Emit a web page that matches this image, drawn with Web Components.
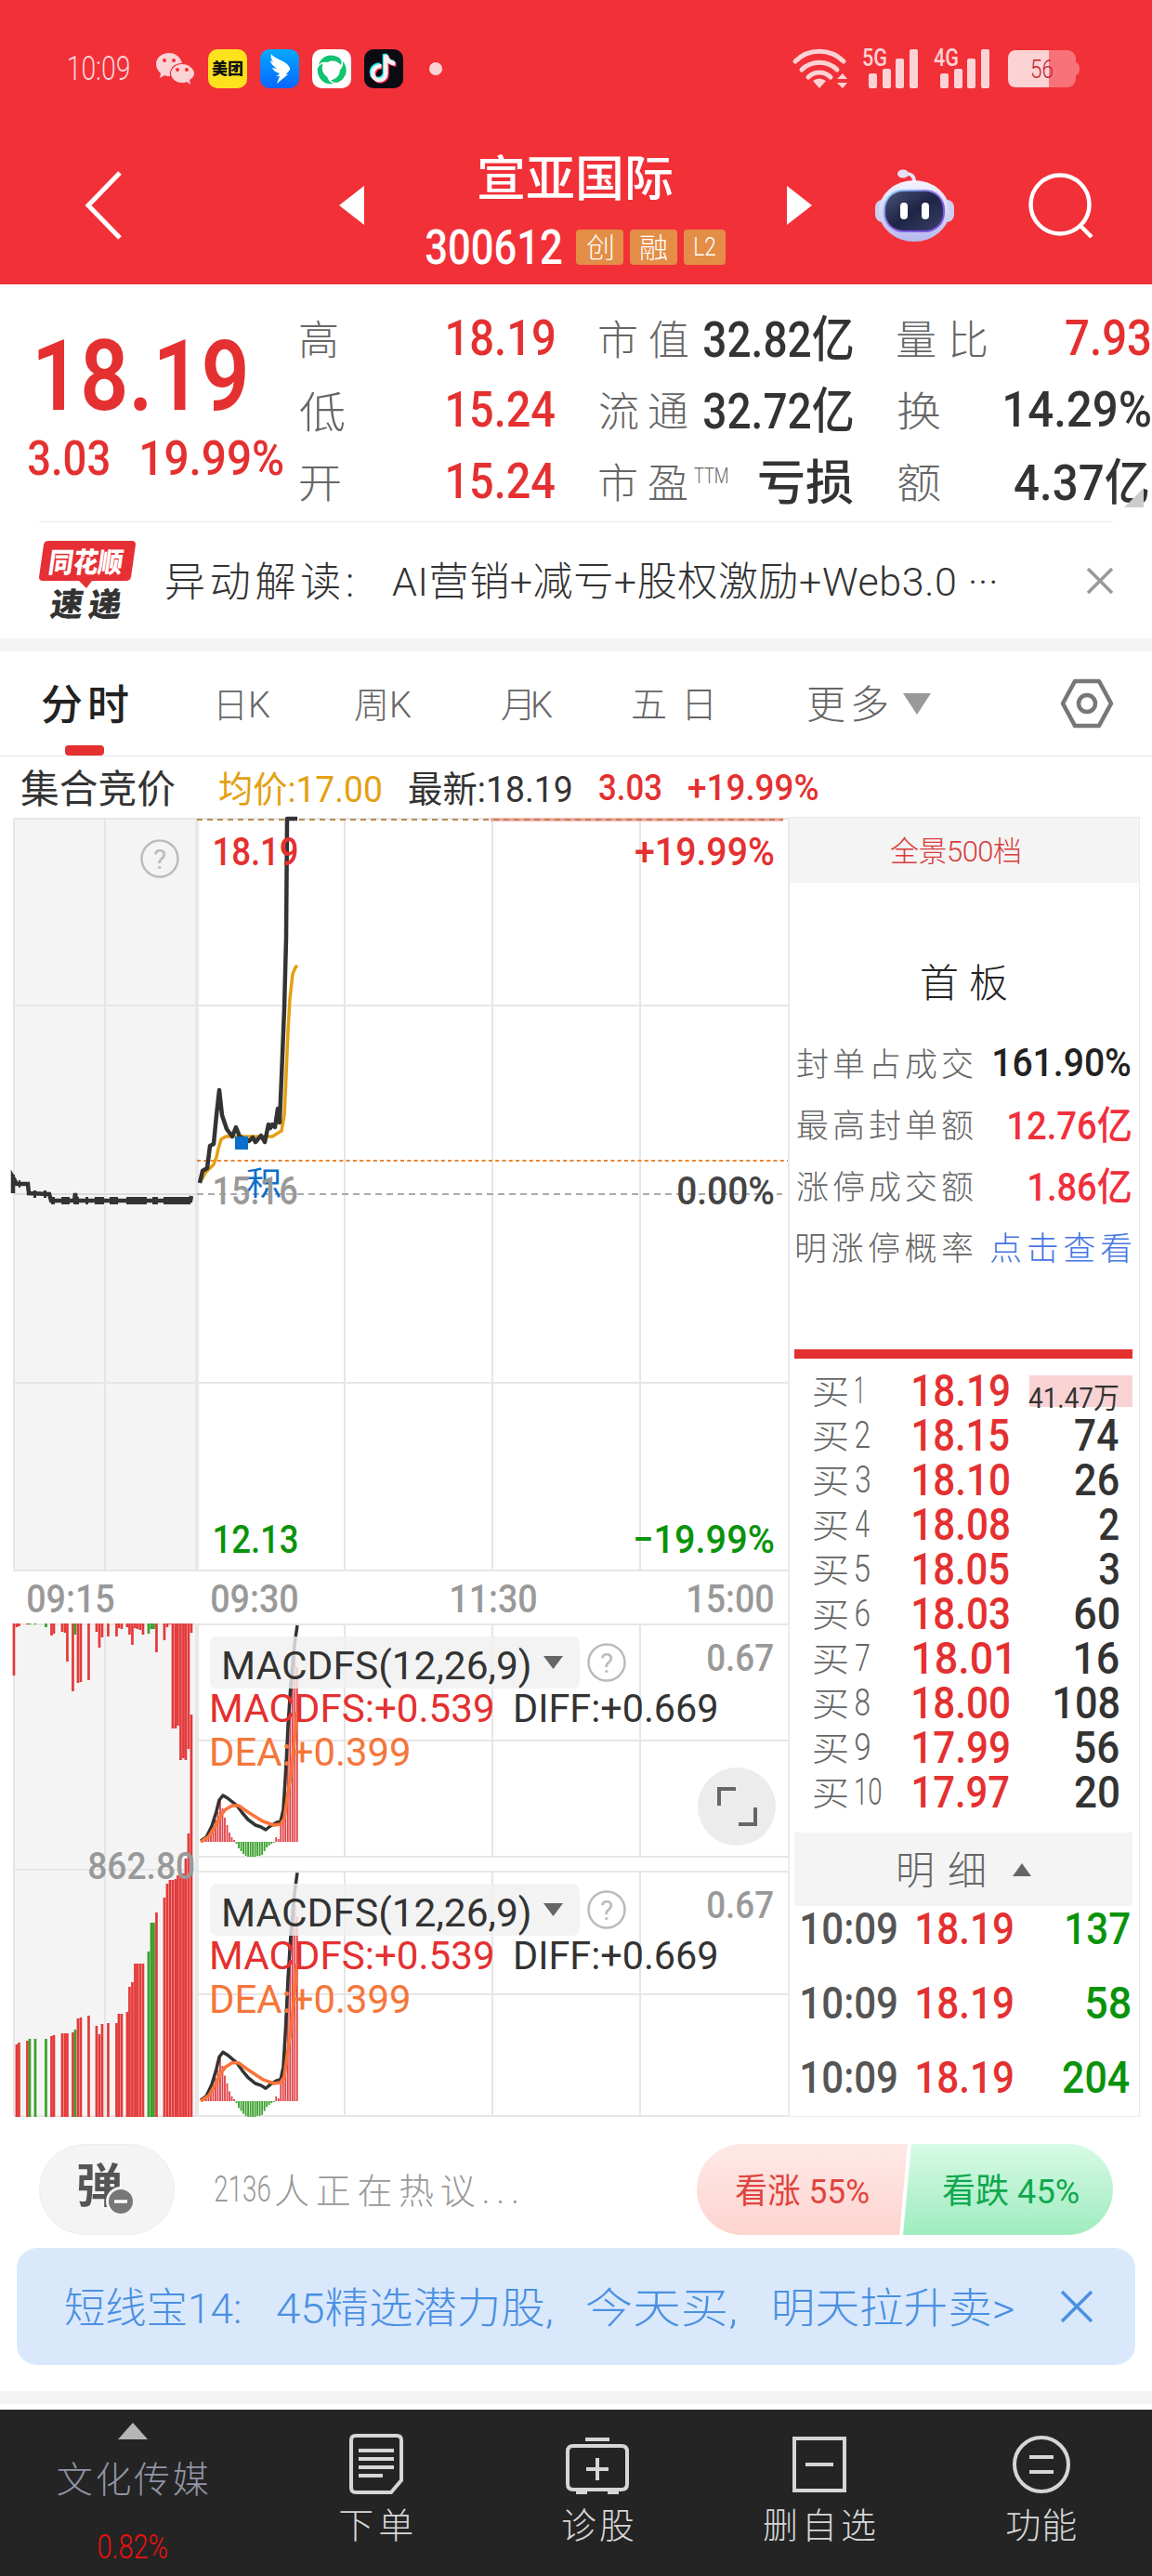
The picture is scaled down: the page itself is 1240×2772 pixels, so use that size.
<!DOCTYPE html>
<html lang="zh-CN">
<head>
<meta charset="utf-8">
<title>宣亚国际 300612</title>
<style>
  body {
    margin: 0;
    width: 1240px;
    height: 2772px;
    overflow: hidden;
    background: #fff;
    color: #333;
    font-family: Roboto, "Noto Sans CJK SC", sans-serif;
  }
</style>
</head>
<body>
<stock-page></stock-page>

<script>
const FONT = 'Roboto, "Noto Sans CJK SC", sans-serif';
const RED = '#e43030';
const pen = document.createElement('canvas').getContext('2d');

// Text whose ink fills exactly `w` pixels: scaled, or letter-spaced with `spread`.
class FitText extends HTMLElement {
  constructor() {
    super();
    this.attachShadow({mode: 'open'});
  }
  connectedCallback() {
    const text = this.getAttribute('text');
    const size = +this.getAttribute('size');
    const weight = this.getAttribute('weight') || 500;
    const w = +this.getAttribute('w');
    pen.font = `${weight} ${size}px ${FONT}`;
    const m = pen.measureText(text);
    const ink = m.actualBoundingBoxRight + m.actualBoundingBoxLeft;
    const spread = this.hasAttribute('spread') && text.length > 1;
    const k = spread ? 1 : w / ink;
    const ls = spread ? (w - ink) / (text.length - 1) : 0;
    // ideographs sit a little high on the Latin baseline
    const drop = /[\u4e00-\u9fff]/.test(text) ? size * .045 : 0;
    this.shadowRoot.innerHTML = `
      <style>
        :host {
          display: block;
          flex: none;
          width: ${w}px;
          height: ${size}px;
          color: ${this.getAttribute('color') || 'inherit'};
        }
        span {
          display: block;
          width: max-content;
          font: ${weight} ${size}px/${size}px ${FONT};
          letter-spacing: ${ls}px;
          white-space: pre;
          transform-origin: 0 0;
          transform: translate(${m.actualBoundingBoxLeft * k}px, ${drop}px) scaleX(${k});
        }
      </style>
      <span></span>
    `;
    this.shadowRoot.querySelector('span').textContent = text;
  }
}
customElements.define('fit-text', FitText);

const t = (text, w, size, color = '', weight = 500, extra = '') =>
  `<fit-text text="${text}" w="${w}" size="${size}" color="${color}" weight="${weight}" ${extra}></fit-text>`;
const thin = (text, w, size, color = '#666', extra = '') => t(text, w, size, color, 300, 'spread ' + extra);
const gap = w => `<span style="flex:none;width:${w}px"></span>`;

class BaseElement extends HTMLElement {
  constructor() {
    super();
    this.attachShadow({mode: 'open'});
  }
  connectedCallback() {
    this.shadowRoot.innerHTML = `<style>svg { display: block; flex: none; overflow: visible; } ${this.getStyles()}</style>${this.getTemplate()}`;
  }
}

class StatusBar extends BaseElement {
  getStyles() {
    return `
      :host { display: flex; align-items: center; height: 44px; padding: 52px 78px 0 74px; }
      .apps { display: flex; gap: 14px; margin-left: 15px; }
      .right { display: flex; align-items: center; margin-left: auto; }
    `;
  }
  getTemplate() {
    const bars = label => `
      <svg width="60" height="44" viewBox="0 0 60 44" fill="#fcd3d5">
        <text x="0" y="19" font-size="26" font-weight="500" font-family="Roboto" textLength="27" lengthAdjust="spacingAndGlyphs">${label}</text>
        <rect x="7" y="27" width="9" height="16" rx="2"/><rect x="22" y="22" width="9" height="21" rx="2"/>
        <rect x="36" y="11" width="9" height="32" rx="2"/><rect x="51" y="1" width="9" height="42" rx="2"/>
      </svg>`;
    return `
      ${t('10:09', 65, 36, '#fcd3d5', 300)}
      <svg style="margin-left:29px" width="41" height="34" viewBox="0 0 41 34">
        <path d="M14 0C6 0 0 5 0 12c0 4 2 7 5 10l-1 5 5-3c2 1 4 1 6 1C14 17 19 11 28 11 26 4 21 0 14 0Z" fill="#fcd3d5"/>
        <path d="M28 12c-7 0-12 5-12 10s5 10 12 10c2 0 3 0 5-1l4 3-1-5c3-2 5-4 5-7 0-5-6-10-13-10Z" fill="#fcd3d5"/>
        <g fill="#f23038"><circle cx="9" cy="8" r="2"/><circle cx="19" cy="8" r="2"/><circle cx="23" cy="18" r="2"/><circle cx="33" cy="18" r="2"/></g>
      </svg>
      <div class="apps">
        <svg width="42" height="42" viewBox="0 0 42 42"><rect width="42" height="42" rx="10" fill="#ffe21e"/>
          <text x="4" y="27" font-size="17" font-weight="900" fill="#111" font-family="Noto Sans CJK SC">美团</text></svg>
        <svg width="42" height="42" viewBox="0 0 42 42">
          <defs><linearGradient id="d" x2="0" y2="1"><stop stop-color="#06a9ff"/><stop offset="1" stop-color="#0966ff"/></linearGradient></defs>
          <rect width="42" height="42" rx="10" fill="url(#d)"/>
          <path d="M12 5c2 4 11 6 17 11q4 4 3 6l-4 5h2L18 37l3-8h-4q3-1 4-3c-4-1-7-3-8-6l5 1c-4-3-7-6-7-9l3 2c-2-3-3-6-2-9Z" fill="#fff"/></svg>
        <svg width="42" height="42" viewBox="0 0 42 42"><rect width="42" height="42" rx="10" fill="#fff"/>
          <g fill="#11c470"><path id="s" d="M7 17C9 8 19 3 29 9c3 3 3 6 2 8-3-4-9-6-14-3-5-1-8 0-10 3Z"/>
            <use href="#s" transform="rotate(120 21 22)"/><use href="#s" transform="rotate(240 21 22)"/></g></svg>
        <svg width="42" height="42" viewBox="0 0 42 42"><rect width="42" height="42" rx="10" fill="#0b0b14"/>
          <g fill="none" stroke-width="4.500"><path d="M18 18c-5-1-9 3-9 8a7 7 0 0 0 14 0V6c1 5 5 9 10 9" stroke="#25f4ee" transform="translate(-1 -1)"/>
          <path d="M18 18c-5-1-9 3-9 8a7 7 0 0 0 14 0V6c1 5 5 9 10 9" stroke="#fe2c55" transform="translate(1.500 1.500)"/>
          <path d="M18 18c-5-1-9 3-9 8a7 7 0 0 0 14 0V6c1 5 5 9 10 9" stroke="#f5f0f0" transform="translate(.3 .3)"/></g></svg>
      </div>
      <svg style="margin-left:28px" width="14" height="14"><circle cx="7" cy="7" r="7" fill="#fcd3d5"/></svg>
      <div class="right">
        <svg width="60" height="44" viewBox="0 0 60 44" fill="none" stroke="#fcd3d5" stroke-width="5" stroke-linecap="round">
          <path d="M3 14a37 37 0 0 1 52 0M10 23a27 27 0 0 1 38 0"/><path d="M17 31a17 17 0 0 1 24 0"/>
          <path d="M22 35q7-5 14 0l-7 8Z M54 27l5 6H48ZM54 43l5-6H48Z" fill="#fcd3d5" stroke="none"/></svg>
        ${gap(15)}${bars('5G')}
        ${gap(17)}${bars('4G')}
        <svg style="margin-left:20px" width="77" height="40" viewBox="0 0 77 40">
          <rect width="73" height="40" rx="9" fill="#f77279"/><path d="M73 13q4 1 4 7t-4 7Z" fill="#f77279"/>
          <path d="M9 0h35v40H9q-9 0-9-9V9q0-9 9-9Z" fill="#fcd3d5"/>
          <text x="24" y="30" font-size="28" font-family="Roboto" font-weight="300" fill="#c4242c" textLength="25" lengthAdjust="spacingAndGlyphs">56</text></svg>
      </div>
    `;
  }
}
customElements.define('status-bar', StatusBar);

class TitleBar extends BaseElement {
  getStyles() {
    return `
      :host { display: flex; align-items: center; height: 142px; padding: 54px 64px 0 92px; }
      .center { width: 455px; display: flex; flex-direction: column; align-items: center; gap: 28px; padding-top: 10px; }
      .code { display: flex; align-items: center; height: 40px; }
      .tag { display: flex; align-items: center; justify-content: center; width: 51px; height: 38px; margin-left: 7px; border-radius: 4px; background: #e48d46; }
    `;
  }
  getTemplate() {
    return `
      <svg width="39" height="74" viewBox="0 0 39 74"><path d="M37 2 3 37l34 35" fill="none" stroke="#fff" stroke-width="5"/></svg>
      <svg style="margin-left:234px" width="27" height="42"><path d="M27 0v42L0 21Z" fill="#fff"/></svg>
      <div class="center">
        ${t('宣亚国际', 208, 52, '#fff')}
        <div class="code">
          ${t('300612', 147, 51, '#fff')}
          <span class="tag" style="margin-left:15px">${t('创', 28, 30, '#fff', 300)}</span>
          <span class="tag">${t('融', 29, 30, '#fff', 300)}</span>
          <span class="tag" style="width:45px">${t('L2', 22, 27, '#fff', 300)}</span>
        </div>
      </div>
      <svg width="27" height="42"><path d="M0 0v42l27-21Z" fill="#fff"/></svg>
      <svg style="margin-left:68px" width="85" height="78" viewBox="0 0 85 78">
        <defs>
          <linearGradient id="h" x2="0" y2="1"><stop stop-color="#f5f4ff"/><stop offset="1" stop-color="#b8b9ee"/></linearGradient>
          <linearGradient id="f" x2="1" y2="1"><stop stop-color="#4a5378"/><stop offset=".5" stop-color="#1e2444"/><stop offset="1" stop-color="#3a4066"/></linearGradient>
          <linearGradient id="e" x2="1" y2="1"><stop stop-color="#7fe3f4"/><stop offset=".5" stop-color="#8d62ea"/><stop offset="1" stop-color="#6d53d8"/></linearGradient>
        </defs>
        <path d="M42 13Q42 4 31 5" fill="none" stroke="#e4e0f4" stroke-width="4"/><ellipse cx="30" cy="5" rx="6" ry="4.500" fill="#e4e0f4"/>
        <rect x="0" y="33" width="85" height="24" rx="8" fill="#cfceef"/>
        <ellipse cx="42" cy="45" rx="38" ry="33" fill="url(#h)"/>
        <rect x="9" y="22" width="66" height="46" rx="21" fill="url(#e)"/><rect x="11" y="24" width="62" height="42" rx="19" fill="url(#f)"/>
        <rect x="27" y="36" width="8" height="18" rx="4" fill="#fff"/><rect x="50" y="36" width="8" height="18" rx="4" fill="#fff"/>
      </svg>
      <svg style="margin-left:80px" width="69" height="70" viewBox="0 0 69 70" fill="none" stroke="#fff" stroke-width="4.500"><circle cx="34" cy="34" r="31.500"/><path d="m56 57 12 12"/></svg>
    `;
  }
}
customElements.define('title-bar', TitleBar);

class QuotePanel extends BaseElement {
  getStyles() {
    return `
      :host { display: flex; height: 255px; position: relative; }
      .price { width: 323px; padding-top: 46px; box-sizing: border-box; }
      .price > div { display: flex; gap: 36px; padding: 10px 0 0 30px; }
      .price > fit-text { margin-left: 41px; }
      .table { display: grid; grid-template-columns: 274px 273px 272px; grid-auto-rows: 77px; column-gap: 48px; padding-top: 20px; }
      .cell { display: flex; align-items: center; justify-content: space-between; }
      .pe { display: flex; align-items: center; gap: 7px; }
      .pe :last-child { margin-top: -12px; }
      .corner { position: absolute; right: 9px; top: 219px; }
    `;
  }
  getTemplate() {
    const cell = (label, value) => `<div class="cell">${label}${value}</div>`;
    return `
      <div class="price">
        ${t('18.19', 223, 106, RED, 600)}
        <div>${t('3.03', 87, 52, RED)}${t('19.99%', 151, 52, RED)}</div>
      </div>
      <div class="table">
        ${cell(thin('高', 40, 44), t('18.19', 115, 53, RED))}
        ${cell(thin('市值', 95, 44), t('32.82亿', 160, 53))}
        ${cell(thin('量比', 96, 44), t('7.93', 91, 53, RED))}
        ${cell(thin('低', 48, 46), t('15.24', 115, 53, RED))}
        ${cell(thin('流通', 95, 44), t('32.72亿', 160, 53))}
        ${cell(thin('换', 46, 44), t('14.29%', 156, 53))}
        ${cell(thin('开', 43, 44), t('15.24', 115, 53, RED))}
        ${cell(`<span class="pe">${thin('市盈', 95, 44)}${t('TTM', 36, 23, '#666', 300)}</span>`, t('亏损', 101, 52))}
        ${cell(thin('额', 46, 44), t('4.37亿', 144, 53, '', 500, 'style="margin-right:2px"'))}
      </div>
      <svg class="corner" width="21" height="21"><path d="M21 0v21H0Z" fill="#ccc"/></svg>
    `;
  }
}
customElements.define('quote-panel', QuotePanel);

class NewsRow extends BaseElement {
  getStyles() {
    return `
      :host { display: flex; align-items: center; height: 125px; margin: 0 42px; border-top: 1px solid #e8e8e8; }
    `;
  }
  getTemplate() {
    return `
      <svg width="104" height="86" viewBox="0 0 104 86" font-family="Noto Sans CJK SC" font-weight="900">
        <path d="M10 0h90q4 0 4 4l-5 35q-1 4-5 4H57l-6 8-8-8H4q-4 0-4-4L5 4q1-4 5-4Z" fill="#e63035"/>
        <text transform="translate(9 34) skewX(-8)" font-size="30" fill="#fff" textLength="80" lengthAdjust="spacingAndGlyphs">同花顺</text>
        <text transform="translate(11 81) skewX(-8)" font-size="35" fill="#333" textLength="76">速递</text>
      </svg>
      ${gap(33)}
      ${thin('异动解读:', 200, 44, '#333')}${gap(43)}
      ${thin('AI营销+减亏+股权激励+Web3.0 ···', 650, 43, '#333')}
      <svg style="margin-left:auto" width="28" height="28"><path d="m1 1 26 26M27 1 1 27" stroke="#999" stroke-width="3.500"/></svg>
    `;
  }
}
customElements.define('news-row', NewsRow);

class TabRow extends BaseElement {
  getStyles() {
    return `
      :host { display: flex; align-items: center; height: 112px; padding-left: 45px; border-top: 14px solid #f4f4f4; border-bottom: 1px solid #e6e6e6; position: relative; }
      i { position: absolute; left: 70px; bottom: 0; width: 42px; height: 11px; border-radius: 4px; background: ${RED}; }
    `;
  }
  getTemplate() {
    return `
      ${t('分时', 93, 45, '#222', 500, 'spread')}${gap(98)}
      ${thin('日K', 55, 38)}${gap(91)}
      ${thin('周K', 61, 38)}${gap(97)}
      ${thin('月K', 55, 38)}${gap(86)}
      ${thin('五日', 84, 39)}${gap(105)}
      ${thin('更多', 85, 42)}${gap(17)}
      <svg width="30" height="24"><path d="M0 1h30L15 24Z" fill="#999"/></svg>
      <svg style="margin-left:139px" width="58" height="54" viewBox="0 0 58 54" fill="none" stroke="#777" stroke-width="4.500" stroke-linejoin="round">
        <path d="M16 3h26l13 24-13 24H16L3 27Z"/><circle cx="29" cy="27" r="9"/></svg>
      <i></i>
    `;
  }
}
customElements.define('tab-row', TabRow);

class LegendRow extends BaseElement {
  getStyles() {
    return `:host { display: flex; align-items: center; height: 62px; padding: 3px 0 0 23px; }`;
  }
  getTemplate() {
    return `
      ${t('集合竞价', 165, 42, '#333', 400)}${gap(48)}
      ${t('均价:17.00', 174, 39, '#e4a012', 400)}${gap(30)}
      ${t('最新:18.19', 175, 39, '#333', 400)}${gap(30)}
      ${t('3.03', 66, 39, RED)}${gap(30)}
      ${t('+19.99%', 139, 39, RED)}
    `;
  }
}
customElements.define('legend-row', LegendRow);

// call auction: [x, height of top bar, height of bottom bar, green?]
const AUCTION = [
  [15, 56, 0], [18, 4, 78], [20.500, 3, 80], [29.500, 1, 82], [32, 1, 84, 1], [38, 1, 84, 1], [49.500, 4, 84, 1],
  [55.500, 13, 87], [58, 11, 88], [67, 9, 90], [70, 10, 90], [72.500, 41, 90], [78.500, 73, 91], [81, 12, 94, 1],
  [84, 64, 106], [87, 63, 107], [95.500, 61, 109], [104, 9, 98], [107, 26, 89], [110, 15, 100], [116.500, 14, 101],
  [125.500, 14, 101], [128, 5, 111], [131, 6, 111], [137, 4, 113], [139.500, 12, 140], [142.500, 23, 145],
  [145.500, 5, 165], [148, 6, 165], [151, 7, 165], [154, 12, 165], [160, 11, 178, 1], [163, 6, 209, 1],
  [165.500, 6, 209, 1], [168.500, 31, 220], [177, 18, 236], [180, 4, 251], [183, 1, 255], [186, 113, 255],
  [189, 113, 256], [191.500, 110, 260], [194.500, 147, 261], [197.500, 145, 262], [200, 147, 278], [203, 135, 305], [206, 10, 433]
];

const HIST = [
  1, 3, 5, 8, 12, 17, 24, 32, 45, 36, 26, 18, 10, 5, 2, -2, -7, -10, -13, -15, -16, -16, -16, -16, -15, -15, -14,
  -10, -6, -4, -2, -1, 5, 3, 18, 48, 88, 128, 160, 183, 200, 188
];
const DIFF = [[216, -1], [222, -5], [228, -17], [233, -33], [236, -45], [240, -50], [245, -47], [255, -39], [261, -31],
  [267, -24], [275, -18], [281, -16], [286, -13], [291, -17], [298, -21], [302, -22], [305, -35], [308, -84], [310, -125], [313, -170], [317, -212], [320, -233]];
const DEA = [[216, 0], [225, -6], [233, -19], [238, -29], [243, -35], [250, -39], [257, -39], [267, -32], [283, -22],
  [295, -18], [302, -19], [306, -25], [308, -39], [313, -72], [316, -100], [320, -140]];

class StockChart extends BaseElement {
  getStyles() {
    return `
      :host { display: block; position: relative; width: 848px; height: 1400px; flex: none; }
      .label { position: absolute; }
      .chip { position: absolute; left: 226px; width: 398px; height: 56px; border-radius: 7px; background: rgba(240, 240, 240, .8); }
    `;
  }
  // x is the left edge of the ink, y the middle of the digits
  label(text, x, y, w, size, color, weight = 500) {
    return `<div class="label" style="left:${x}px;top:${y - 878.500 - size / 2}px">${t(text, w, size, color, weight)}</div>`;
  }
  line(x1, y1, x2, y2, color = '#e6e6e6', extra = 'stroke-width="2"') {
    return `<path d="M${x1} ${y1}L${x2} ${y2}" stroke="${color}" fill="none" ${extra}/>`;
  }
  help(x, y) {
    return `<circle cx="${x}" cy="${y}" r="19.500" fill="none" stroke="#bbb" stroke-width="2.500"/>
      <text x="${x}" y="${y + 11}" font-size="30" font-family="Roboto" fill="#bbb" text-anchor="middle">?</text>`;
  }
  curve(points, base, k, color) {
    const d = points.map(([x, y]) => `${x},${base + y * k}`).join(' ');
    return `<polyline points="${d}" fill="none" stroke="${color}" stroke-width="3.500" stroke-linejoin="round"/>`;
  }
  macd(base, k) {
    const bars = HIST.map((h, i) => {
      const x = 216 + i * 2.510;
      const hk = Math.abs(h) * k;
      return `<rect x="${x}" y="${h > 0 ? base - hk : base}" width="1.800" height="${hk}" fill="${h > 0 ? '#df4247' : '#3aa02c'}"/>`;
    }).join('');
    return bars + this.curve(DIFF, base, k, '#333') + this.curve(DEA, base, k, '#fa7338');
  }
  macdLabels(dy) {
    return `
      <div class="chip" style="top:${882 + dy}px"></div>
      ${this.label('MACDFS(12,26,9)', 241, 1792 + dy, 329, 42, '#333', 400)}
      ${this.label('0.67', 762, 1784 + dy, 70, 41, '#999')}
      ${this.label('MACDFS:+0.539', 228, 1838 + dy, 302, 42, RED, 400)}
      ${this.label('DIFF:+0.669', 555, 1838 + dy, 216, 42, '#333', 400)}
      ${this.label('DEA:+0.399', 228, 1885 + dy, 212, 42, '#f5763a', 400)}
    `;
  }
  getTemplate() {
    const auction = AUCTION.map(([x, top, bottom, green]) => {
      const fill = green ? '#3aa02c' : '#e43a3a';
      return `<rect x="${x - 1.400}" y="1747" width="2.700" height="${top}" fill="${fill}"/>
        <rect x="${x - 1.400}" y="${2278 - bottom}" width="2.700" height="${bottom}" fill="${fill}"/>`;
    }).join('');
    const grid = [371, 530, 689].map(x =>
      this.line(x, 881, x, 1690) + this.line(x, 1748, x, 1998) + this.line(x, 2014, x, 2277)).join('');
    return `
      <svg width="848" height="1400" viewBox="0 879 848 1400">
        <path d="M15 881h197v809H15ZM15 1748h197v529H15Z" fill="#f4f4f4"/>
        ${this.line(15, 881, 15, 1690)}${this.line(113, 881, 113, 1690)}${this.line(212, 881, 212, 1690, '#e8e8e8', 'stroke-width="4"')}
        ${this.line(15, 1748, 15, 2277)}${this.line(113, 1748, 113, 2277)}${this.line(212, 1748, 212, 2277, '#e8e8e8', 'stroke-width="4"')}
        ${grid}
        ${[881, 1082, 1488, 1690].map(y => this.line(15, y, 848, y)).join('')}
        ${[1748, 1873, 1998, 2014, 2146, 2277].map(y => this.line(212, y, 848, y)).join('')}
        ${this.line(15, 1748, 212, 1748)}${this.line(15, 2012, 212, 2012)}${this.line(15, 2277, 212, 2277)}
        ${this.line(15, 1285, 212, 1285, '#ddd')}
        ${this.line(212, 1285, 842, 1285, '#aaa', 'stroke-width="2" stroke-dasharray="7 5"')}
        ${this.line(212, 1249, 848, 1249, '#ec842d', 'stroke-width="2" stroke-dasharray="4 3.300"')}
        ${this.line(528, 882, 843, 882, '#f3a5a5', 'stroke-width="3.500"')}
        ${this.line(212, 882, 843, 882, '#b98b50', 'stroke-width="2" stroke-dasharray="6 5"')}
        <polyline fill="none" stroke="#e4a012" stroke-width="3.500" points="217,1270 221,1262 230,1253 233,1245 235,1236 238,1226 243,1223 293,1223 303,1217 306,1200 307,1180 310,1110 312,1075 315,1048 318,1041 320,1039"/>
        <polyline fill="none" stroke="#333" stroke-width="4.500" stroke-linejoin="round" points="215,1273 218,1260 223,1257 226,1233 230,1231 233,1200 236,1173 239,1200 244,1215 250,1223 254,1213 258,1223 268,1228 272,1224 275,1229 281,1222 285,1229 289,1210 291,1214 293,1210 296,1213 299,1193 301,1208 303,1160 306,1085 308,1010 309,881 320,881"/>
        <polyline fill="none" stroke="#333" stroke-width="4.500" points="14,1284 14,1267 18,1274 30,1274 31,1284 53,1285 55,1292 80,1292 81,1284 82,1292 205,1292 206,1287"/>
        <path d="M15 1268h1M20 1274h2M36 1285h3M47 1285h3M55 1292h4M66 1292h9M79 1292h6M92 1292h3M102 1292h10M118 1292h9M136 1292h22M164 1292h6M176 1292h29" fill="none" stroke="#333" stroke-width="8"/>
        <rect x="253" y="1223" width="14" height="14" fill="#0a6fcb"/>
        ${auction}
        ${this.macd(1982, 1)}
        ${this.macd(2261, 1.055)}
        ${this.help(172, 924)}
      </svg>
      ${this.label('18.19', 231, 916, 89, 42, RED)}
      ${this.label('+19.99%', 684, 916, 149, 42, RED)}
      ${this.label('积', 266, 1272, 36, 35, '#0a6fcb', 400)}
      ${this.label('15.16', 231, 1281, 89, 42, '#999')}
      ${this.label('0.00%', 730, 1281, 103, 42, '#444')}
      ${this.label('12.13', 231, 1656, 89, 42, '#0a930a')}
      ${this.label('−19.99%', 684, 1656, 149, 42, '#0a930a')}
      ${this.label('09:15', 30, 1720, 93, 42, '#999')}
      ${this.label('09:30', 228, 1720, 92, 42, '#999')}
      ${this.label('11:30', 486, 1720, 91, 42, '#999')}
      ${this.label('15:00', 741, 1720, 91, 42, '#999')}
      ${this.label('862.80', 96, 2008, 113, 41, '#999')}
      ${this.macdLabels(0)}
      ${this.macdLabels(266)}
      <svg class="label" style="left:0;top:0" width="848" height="1400" viewBox="0 879 848 1400">
        <path d="M585 1782h21l-10.500 14ZM585 2048h21l-10.500 14Z" fill="#666"/>
        ${this.help(653, 1789)}${this.help(653, 2055)}
        <circle cx="793" cy="1944" r="42" fill="#ececec"/>
        <path d="M774 1943v-18h18M795 1963h18v-18" fill="none" stroke="#666" stroke-width="4"/>
      </svg>
    `;
  }
}
customElements.define('stock-chart', StockChart);

class OrderBook extends BaseElement {
  getStyles() {
    return `
      :host { display: block; width: 379px; height: 1399px; flex: none; border: 1px solid #eaeaea; border-left-width: 2px; box-sizing: border-box; }
      .head { display: flex; align-items: center; justify-content: center; height: 70px; padding-right: 20px; background: #f4f4f4; }
      .board { display: flex; justify-content: center; padding: 86px 0 33px; }
      .stat { display: flex; align-items: center; justify-content: space-between; height: 66px; padding: 0 9px 0 8px; }
      .bar { height: 10px; margin: 77px 7px 11px 5px; background: ${RED}; }
      .bid { display: flex; align-items: center; height: 48.060px; margin: 0 7px 0 26px; }
      .bid .no { display: flex; align-items: center; width: 107px; gap: 9px; }
      .qty { display: flex; align-items: center; justify-content: flex-end; flex: 1; height: 34px; padding-right: 15px; }
      .qty.hot { flex: none; width: 96px; margin-left: auto; background: #f9d3d4; }
      .detail { display: flex; align-items: center; height: 79px; margin: 19px 7px 0 5px; padding-left: 112px; box-sizing: border-box; background: #f4f4f4; gap: 31px; }
      .tick { display: flex; align-items: center; height: 80px; padding: 0 10px 0 13px; }
      .ticks { margin-top: -15px; }
      .tick :nth-child(2) { margin-left: 22px; }
      .tick :last-child { margin-left: auto; }
    `;
  }
  getTemplate() {
    const stat = (label, value) => `<div class="stat">${thin(label, 189, 35)}${value}</div>`;
    const bids = [['18.19', ''], ['18.15', '74'], ['18.10', '26'], ['18.08', '2'], ['18.05', '3'],
      ['18.03', '60'], ['18.01', '16'], ['18.00', '108'], ['17.99', '56'], ['17.97', '20']];
    const widths = {1: 21, 2: 47, 3: 69};
    const bid = ([price, qty], i) => `
      <div class="bid">
        <span class="no">${thin('买', 36, 36)}${t(i + 1, i === 9 ? 27 : i ? 15 : 6, 40, '#666', 300)}</span>
        ${t(price, 103, 48, RED)}
        ${qty ? `<span class="qty">${t(qty, widths[qty.length], 48)}</span>` : `<span class="qty hot">${t('41.47万', 97, 31, '#333', 400, 'style="margin-top:12px"')}</span>`}
      </div>`;
    const tick = (qty, w) => `<div class="tick">${t('10:09', 102, 48, '#555')}${t('18.19', 103, 48, RED)}${t(qty, w, 48, '#0a930a')}</div>`;
    return `
      <div class="head">${thin('全景500档', 140, 31, '#d93b3b')}</div>
      <div class="board">${thin('首板', 92, 42, '#222')}</div>
      ${stat('封单占成交', t('161.90%', 147, 42, '#222'))}
      ${stat('最高封单额', t('12.76亿', 131, 42, '#f0303c'))}
      ${stat('涨停成交额', t('1.86亿', 109, 42, '#f0303c'))}
      ${stat('明涨停概率', thin('点击查看', 151, 35, '#4676e4'))}
      <div class="bar"></div>
      ${bids.map(bid).join('')}
      <div class="detail">${thin('明细', 92, 42)}<svg width="20" height="14"><path d="M10 0 20 14H0Z" fill="#666"/></svg></div>
      <div class="ticks">${tick('137', 68)}${tick('58', 47)}${tick('204', 72)}</div>
    `;
  }
}
customElements.define('order-book', OrderBook);

class TalkRow extends BaseElement {
  getStyles() {
    return `
      :host { display: flex; align-items: center; height: 98px; padding: 0 42px; margin-top: 28px; }
      .dan { display: flex; width: 144px; height: 96px; border: 1px solid #eee; border-radius: 49px; background: #f4f4f4; margin-right: 43px; }
      .vote { position: relative; width: 448px; height: 98px; margin-left: auto; }
      .vote svg { position: absolute; inset: 0; }
      .vote div { position: relative; display: flex; align-items: center; gap: 80px; height: 100%; padding-left: 42px; }
    `;
  }
  getTemplate() {
    return `
      <div class="dan"><svg width="144" height="96" viewBox="43 2308 144 96">
        <text x="82" y="2370" font-family="Noto Sans CJK SC" font-size="50" font-weight="700" fill="#555">弹</text>
        <circle cx="130" cy="2369" r="14.500" fill="#777" stroke="#f4f4f4" stroke-width="3"/><path d="M123 2369h14" stroke="#fff" stroke-width="3.500"/>
      </svg></div>
      ${t('2136', 60, 38, '#999', 300)}${gap(5)}
      ${thin('人正在热议...', 260, 38, '#999')}
      <div class="vote">
        <svg width="448" height="98" viewBox="0 0 448 98">
          <defs>
            <linearGradient id="r" x2="0" y2="1"><stop stop-color="#fee9e7"/><stop offset="1" stop-color="#fed4cf"/></linearGradient>
            <linearGradient id="g" x2="0" y2="1"><stop stop-color="#d8fae6"/><stop offset="1" stop-color="#9eecbf"/></linearGradient>
          </defs>
          <path d="M49 0h178l-9 98H49a49 49 0 0 1 0-98Z" fill="url(#r)"/>
          <path d="M231 0h168a49 49 0 0 1 0 98H222Z" fill="url(#g)"/>
        </svg>
        <div>${t('看涨 55%', 143, 37, '#e0443e', 400)}${t('看跌 45%', 146, 37, '#0fa84e', 400)}</div>
      </div>
    `;
  }
}
customElements.define('talk-row', TalkRow);

class PromoBar extends BaseElement {
  getStyles() {
    return `
      :host { display: flex; align-items: center; height: 126px; margin: 14px 18px 0; padding: 0 46px 0 52px; border-radius: 22px; background: #dae8fb; }
    `;
  }
  getTemplate() {
    return `
      ${t('短线宝14:', 188, 45, '#4a90e2', 300)}${gap(40)}
      ${t('45精选潜力股,', 295, 45, '#4a90e2', 300)}${gap(38)}
      ${t('今天买,', 160, 45, '#4a90e2', 300)}${gap(42)}
      ${t('明天拉升卖&gt;', 258, 45, '#4a90e2', 300)}
      <svg style="margin-left:auto" width="34" height="34"><path d="m1 1 32 32M33 1 1 33" stroke="#4a90e2" stroke-width="3.500"/></svg>
    `;
  }
}
customElements.define('promo-bar', PromoBar);

class BottomNav extends BaseElement {
  getStyles() {
    return `
      :host { display: flex; height: 179px; margin-top: 6px; background: #242424; }
      .sector { width: 286px; display: flex; flex-direction: column; align-items: center; padding-top: 14px; box-sizing: border-box; }
      .item { width: 239px; display: flex; flex-direction: column; align-items: center; }
      .icon { display: flex; align-items: center; height: 118px; }
    `;
  }
  getTemplate() {
    const item = (icon, label, w) => `
      <div class="item">
        <div class="icon"><svg width="68" height="66" viewBox="0 0 68 66" fill="none" stroke="#d6d6d6" stroke-width="4">${icon}</svg></div>
        <div style="margin-top:-14px">${thin(label, w, 38, '#d6d6d6')}</div>
      </div>`;
    return `
      <div class="sector">
        <svg width="32" height="18"><path d="M16 0 32 18H0Z" fill="#b5b5b5"/></svg>
        <span style="height:23px"></span>
        ${thin('文化传媒', 162, 39, '#9194a6')}
        <span style="height:35px"></span>
        ${t('0.82%', 74, 37, '#f01010', 300)}
      </div>
      ${item('<path d="M12 2h44q5 0 5 5v43L50 63H12q-5 0-5-5V7q0-5 5-5ZM15 18h38M15 27h38M15 36h38M15 45h26"/>', '下单', 77)}
      ${item('<path d="M8 13h52q6 0 6 6v35q0 6-6 6H8q-6 0-6-6V19q0-6 6-6ZM21 6h26M34 26v24M22 38h24M11 63h12M45 63h12"/>', '诊股', 77)}
      ${item('<path d="M7 5h54v56H7ZM19 33h30"/>', '删自选', 120)}
      ${item('<circle cx="34" cy="33" r="29"/><path d="M21 25h26M21 41h26"/>', '功能', 75)}
    `;
  }
}
customElements.define('bottom-nav', BottomNav);

class StockPage extends BaseElement {
  getStyles() {
    return `
      :host { display: flex; flex-direction: column; height: 2772px; }
      header { height: 306px; background: #f23038; box-sizing: border-box; }
      main { display: flex; align-items: flex-start; }
      .band { height: 14px; margin-top: 28px; background: #f4f4f4; }
    `;
  }
  getTemplate() {
    return `
      <header><status-bar></status-bar><title-bar></title-bar></header>
      <quote-panel></quote-panel>
      <news-row></news-row>
      <tab-row></tab-row>
      <legend-row></legend-row>
      <main><stock-chart></stock-chart><order-book></order-book></main>
      <talk-row></talk-row>
      <promo-bar></promo-bar>
      <div class="band"></div>
      <bottom-nav></bottom-nav>
    `;
  }
}
customElements.define('stock-page', StockPage);
</script>
</body>
</html>
